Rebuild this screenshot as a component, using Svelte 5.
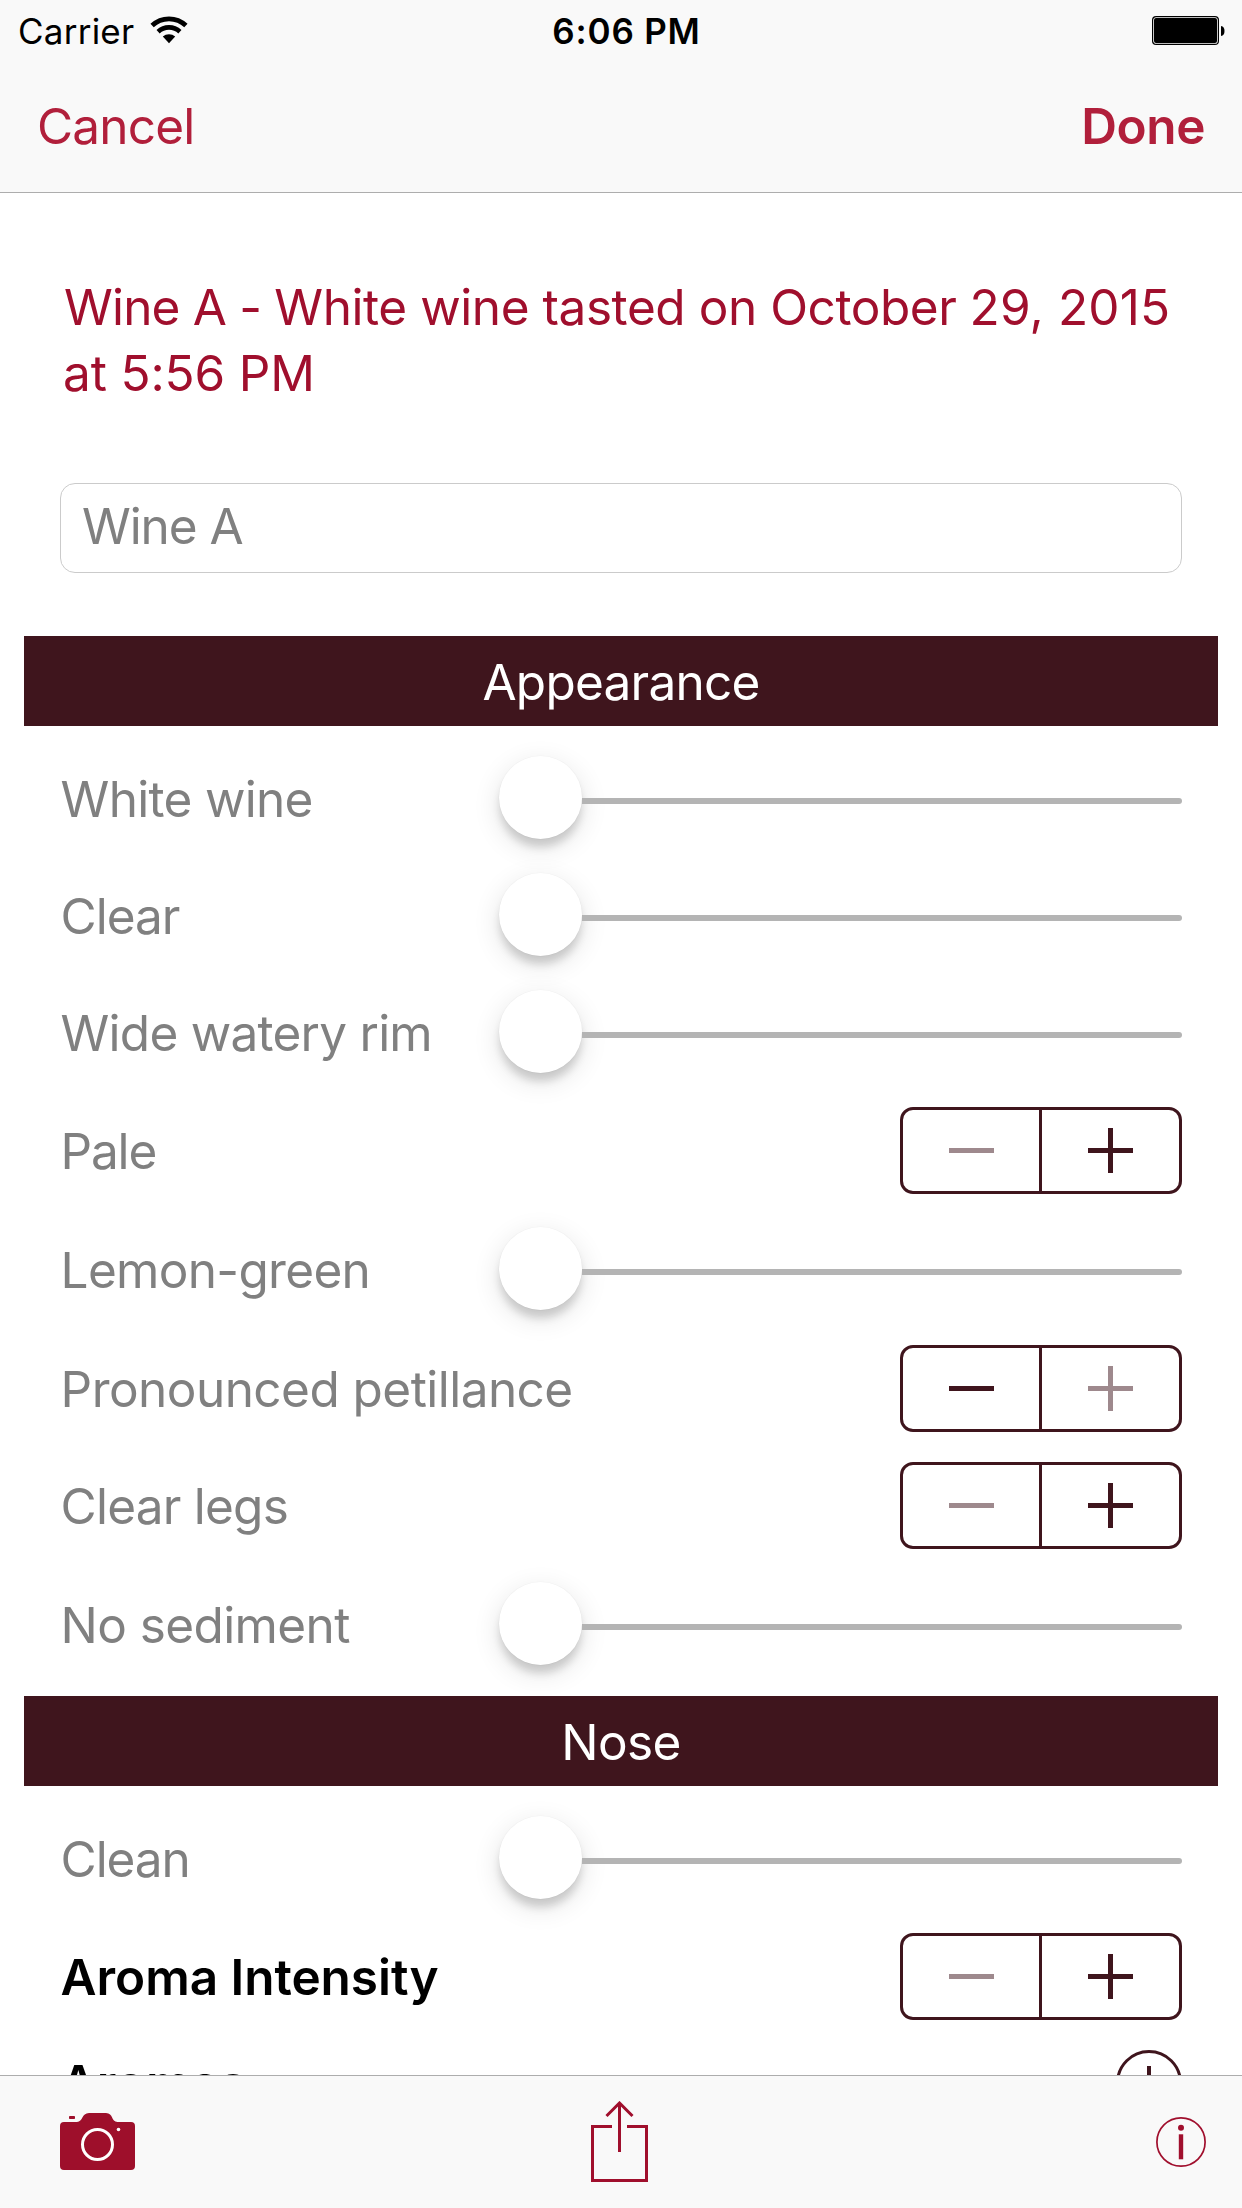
<script>
  // kind: slider | stepper | add; `at` marks a stepper already at its min or max value
  const sections = [
    {
      title: 'Appearance',
      tracking: -0.76,
      rows: [
        { label: 'White wine', kind: 'slider', tracking: -0.7 },
        { label: 'Clear', kind: 'slider', tracking: -1.02 },
        { label: 'Wide watery rim', kind: 'slider', tracking: -0.75 },
        { label: 'Pale', kind: 'stepper', at: 'min', tracking: -1.2 },
        { label: 'Lemon-green', kind: 'slider', tracking: -0.68 },
        { label: 'Pronounced petillance', kind: 'stepper', at: 'max', tracking: -0.54 },
        { label: 'Clear legs', kind: 'stepper', at: 'min', tracking: -0.77 },
        { label: 'No sediment', kind: 'slider', tracking: -0.6 }
      ]
    },
    {
      title: 'Nose',
      tracking: -0.6,
      rows: [
        { label: 'Clean', kind: 'slider', tracking: -1.1 },
        { label: 'Aroma Intensity', kind: 'stepper', at: 'min', strong: true, tracking: -0.04 },
        { label: 'Aromas', kind: 'add', strong: true, tracking: 0.2 }
      ]
    }
  ];
</script>

<div class="screen">
  <header class="top">
    <div class="status">
      <div class="carrier">
        <span class="carrier-name">Carrier</span>
        <svg class="wifi" width="38" height="28" viewBox="0 0 38 28" aria-hidden="true">
          <path d="M2.1 9.5A24.7 24.7 0 0 1 35.9 9.5" fill="none" stroke="#000" stroke-width="4.8" />
          <path d="M8.1 15.7A16 16 0 0 1 29.9 15.7" fill="none" stroke="#000" stroke-width="4.6" />
          <path d="M19 27.2L12.8 20.6A9.3 9.3 0 0 1 25.2 20.6Z" fill="#000" />
        </svg>
      </div>
      <span class="clock">6:06 PM</span>
      <svg class="battery" width="74" height="29" viewBox="0 0 74 29" aria-hidden="true">
        <rect x="0.6" y="0.6" width="65.8" height="27.8" rx="3.5" fill="#f9f9f9" stroke="#000" stroke-width="1.2" />
        <rect x="2" y="2" width="63" height="25" rx="2" fill="#000" />
        <path d="M69 10Q72.5 10.5 72.5 15Q72.5 19.5 69 20Z" fill="#000" />
      </svg>
    </div>
    <nav class="nav">
      <span class="cancel">Cancel</span>
      <span class="done">Done</span>
    </nav>
  </header>

  <main class="content">
    <h1 class="title">
      <span class="wine">Wine A -</span>
      <span class="kind">White wine tasted on October</span>
      <span class="date">29, 2015</span><br />
      <span class="time">at 5:56 PM</span>
    </h1>
    <div class="field">Wine A</div>

    {#each sections as section}
      <section class="section">
        <h2 class="band" style:letter-spacing="{section.tracking}px">{section.title}</h2>
        {#each section.rows as row}
          <div class="row {row.kind}-row">
            <span class="label" class:strong={row.strong} style:letter-spacing="{row.tracking}px">{row.label}</span>
            {#if row.kind === 'slider'}
              <div class="slider">
                <div class="knob"></div>
                <div class="track"></div>
              </div>
            {:else if row.kind === 'stepper'}
              <div class="stepper">
                <div class="half" class:off={row.at === 'min'}>
                  <svg width="45" height="45" viewBox="0 0 45 45" aria-hidden="true">
                    <path d="M0 20h45v5H0z" fill="currentColor" />
                  </svg>
                </div>
                <div class="half plus" class:off={row.at === 'max'}>
                  <svg width="45" height="45" viewBox="0 0 45 45" aria-hidden="true">
                    <path d="M0 20H20V0H25V20H45V25H25V45H20V25H0Z" fill="currentColor" />
                  </svg>
                </div>
              </div>
            {:else}
              <svg class="add" width="66" height="66" viewBox="0 0 66 66" aria-hidden="true">
                <circle cx="33" cy="33" r="31.5" fill="none" stroke="#3f151d" stroke-width="3" />
                <path d="M33 16V50M16 33H50" stroke="#3f151d" stroke-width="4" />
              </svg>
            {/if}
          </div>
        {/each}
      </section>
    {/each}
  </main>

  <footer class="toolbar">
    <svg class="camera" width="75" height="57" viewBox="0 0 75 57" aria-hidden="true">
      <path
        d="M4 9H17C23 9 21.5 0 29 0H46C53.5 0 51 9 57.5 9H71Q75 9 75 13V53Q75 57 71 57H4Q0 57 0 53V13Q0 9 4 9Z"
        fill="#9e0f2b"
      />
      <rect x="9" y="3" width="6" height="3" rx="0.8" fill="#9e0f2b" />
      <circle cx="37.5" cy="31.5" r="15" fill="none" stroke="#fff" stroke-width="3" />
      <circle cx="58.5" cy="16.5" r="1.8" fill="#fff" />
    </svg>
    <svg class="share" width="57" height="81" viewBox="0 0 57 81" fill="none" stroke="#a00f2d" stroke-width="3" aria-hidden="true">
      <path d="M21 25.5H1.5V79.5H55.5V25.5H36" />
      <path d="M28.5 51V2M15.5 15L28.5 2L41.5 15" />
    </svg>
    <svg class="info" width="50" height="50" viewBox="0 0 50 50" aria-hidden="true">
      <circle cx="25" cy="25" r="24.1" fill="none" stroke="#a00f2d" stroke-width="1.7" />
      <circle cx="25" cy="10.8" r="3" fill="#a00f2d" />
      <path d="M22.8 17.3h4.4v25h-4.4z" fill="#a00f2d" />
    </svg>
  </footer>
</div>

<style>
  :global(body) {
    background: #fff;
  }

  .screen {
    box-sizing: border-box;
    display: flex;
    flex-direction: column;
    width: 1242px;
    height: 2208px;
    overflow: hidden;
    background: #fff;
    color: #000;
    font-family: Inter, "Liberation Sans", sans-serif;
    font-size: 49.5px;
    font-weight: 400;
  }

  .top {
    box-sizing: border-box;
    flex: none;
    height: 193px;
    background: #f9f9f9;
    border-bottom: 1px solid #adadad;
  }

  .status {
    display: grid;
    grid-template-columns: 1fr auto 1fr;
    align-items: center;
    height: 62px;
    padding: 0 16px 0 18px;
    font-size: 35px;
    line-height: 62px;
  }

  .carrier {
    display: flex;
    align-items: center;
    gap: 16px;
  }

  .carrier-name {
    letter-spacing: 0.24px;
  }

  .wifi {
    margin-top: -3px;
  }

  .clock {
    font-weight: 600;
    letter-spacing: 0.81px;
    margin-left: 9px;
  }

  .battery {
    justify-self: end;
    margin-top: -1px;
  }

  .nav {
    display: flex;
    justify-content: space-between;
    padding: 0 37px;
    color: #b11f3b;
    line-height: 128px;
  }

  .cancel {
    letter-spacing: -0.8px;
  }

  .done {
    font-weight: 600;
    letter-spacing: -0.4px;
  }

  .content {
    flex: 1;
    min-height: 0;
    overflow: hidden;
  }

  .title {
    margin: 81px 0 0 64px;
    color: #a00f2d;
    font-size: inherit;
    font-weight: 400;
    letter-spacing: -0.8px;
    line-height: 66px;
    white-space: nowrap;
  }

  .kind {
    letter-spacing: -0.44px;
  }

  .date {
    letter-spacing: 0.15px;
  }

  .time {
    margin-left: -1px;
    letter-spacing: -0.15px;
  }

  .field {
    box-sizing: border-box;
    height: 90px;
    margin: 77px 60px 0;
    padding-left: 21px;
    border: 1px solid #cbcbcb;
    border-radius: 15px;
    color: #808080;
    letter-spacing: -1.08px;
    line-height: 85px;
  }

  .section {
    margin-top: 27px;
  }

  .field + .section {
    margin-top: 63px;
  }

  .band {
    box-sizing: border-box;
    height: 90px;
    margin: 0 24px;
    background: #3f151d;
    color: #fff;
    font-size: inherit;
    font-weight: 400;
    line-height: 92px;
    text-align: center;
  }

  .row {
    box-sizing: border-box;
    display: flex;
    align-items: center;
    justify-content: space-between;
    margin: 24px 60px 0;
  }

  .label {
    padding-left: 0.6px;
    color: #808080;
    white-space: nowrap;
  }

  .strong {
    color: #000;
    font-weight: 600;
  }

  .slider-row {
    height: 93px;
  }

  .slider-row .label {
    padding-top: 5px;
  }

  .stepper-row {
    height: 87px;
  }

  .slider-row + .stepper-row,
  .stepper-row + .stepper-row {
    margin-top: 30px;
  }

  .stepper-row + .slider-row {
    margin-top: 27px;
  }

  .stepper-row + .slider-row + .stepper-row {
    margin-top: 31px;
  }

  .add-row {
    height: 66px;
    margin-top: 30px;
  }

  .slider {
    display: flex;
    align-items: center;
    width: 683px;
  }

  .knob {
    flex: none;
    width: 83px;
    height: 83px;
    margin-top: 2px;
    border-radius: 50%;
    background: #fff;
    box-shadow:
      0 0 1px 0.5px rgba(0, 0, 0, 0.03),
      0 9px 9px -1px rgba(0, 0, 0, 0.16),
      0 8px 26px 3px rgba(0, 0, 0, 0.09);
  }

  .track {
    flex: 1;
    height: 6px;
    margin-top: 9px;
    border-radius: 0 3px 3px 0;
    background: #b4b4b4;
  }

  .stepper {
    box-sizing: border-box;
    display: flex;
    width: 282px;
    height: 87px;
    border: 3px solid #3f151d;
    border-radius: 13px;
    color: #3f151d;
  }

  .half {
    box-sizing: border-box;
    display: flex;
    align-items: center;
    justify-content: center;
    width: 136px;
    padding-left: 1px;
  }

  .half.plus {
    width: 140px;
    border-left: 3px solid #3f151d;
    padding-left: 0;
  }

  .off svg {
    opacity: 0.5;
  }

  .toolbar {
    box-sizing: border-box;
    display: grid;
    grid-template-columns: 1fr auto 1fr;
    flex: none;
    align-items: start;
    height: 133px;
    padding-right: 3px;
    background: #f9f9f9;
    border-top: 1px solid #adadad;
  }

  .camera {
    margin: 37px 0 0 60px;
  }

  .share {
    margin-top: 25px;
  }

  .info {
    justify-self: end;
    margin: 40.5px 33.5px 0 0;
  }
</style>
